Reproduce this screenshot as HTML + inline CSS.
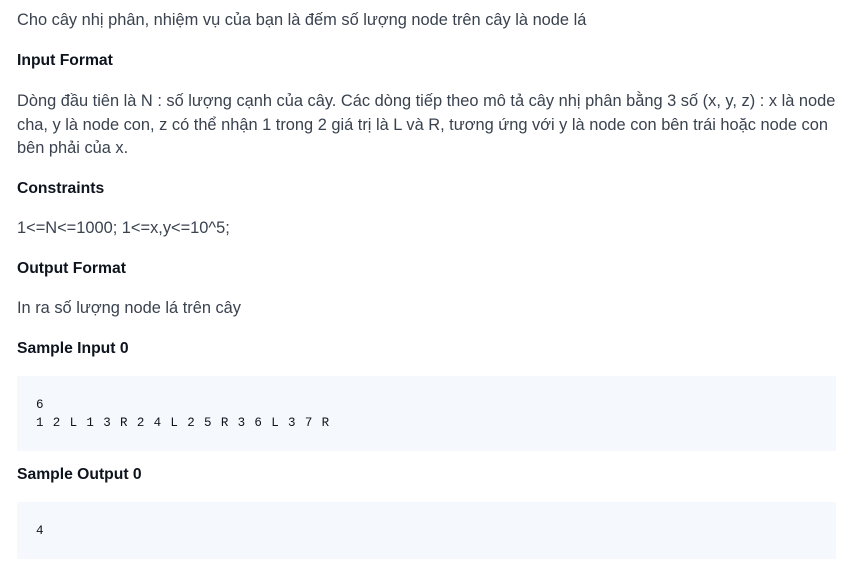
<!DOCTYPE html>
<html><head><meta charset="utf-8"><style>
body{margin:0;width:849px;height:561px;background:#fff;font-family:"Liberation Sans",sans-serif;color:#0e141e;position:relative;overflow:hidden}
.t{position:absolute;left:17px;font-size:16.4px;white-space:nowrap;line-height:20px;color:#39424e}
.h{position:absolute;left:17px;font-size:15.7px;font-weight:bold;white-space:nowrap;line-height:20px;color:#0e141e}
.code{position:absolute;left:17px;width:819px;background:#f5f8fc}
.c{position:absolute;left:36px;font-family:"Liberation Mono",monospace;font-size:12.5px;letter-spacing:0.9px;line-height:18px;color:#0e141e;white-space:pre}
</style></head><body>
<div class="t" style="top:10px">Cho cây nhị phân, nhiệm vụ của bạn là đếm số lượng node trên cây là node lá</div>
<div class="h" style="top:51px">Input Format</div>
<div class="t" style="top:91px">Dòng đầu tiên là N : số lượng cạnh của cây. Các dòng tiếp theo mô tả cây nhị phân bằng 3 số (x, y, z) : x là node</div>
<div class="t" style="top:115px">cha, y là node con, z có thể nhận 1 trong 2 giá trị là L và R, tương ứng với y là node con bên trái hoặc node con</div>
<div class="t" style="top:138px">bên phải của x.</div>
<div class="h" style="top:179px">Constraints</div>
<div class="t" style="top:218px">1&lt;=N&lt;=1000; 1&lt;=x,y&lt;=10^5;</div>
<div class="h" style="top:259px">Output Format</div>
<div class="t" style="top:298px">In ra số lượng node lá trên cây</div>
<div class="h" style="top:339px">Sample Input 0</div>
<div class="code" style="top:376px;height:75px"></div>
<div class="c" style="top:396px">6
1 2 L 1 3 R 2 4 L 2 5 R 3 6 L 3 7 R</div>
<div class="h" style="top:465px">Sample Output 0</div>
<div class="code" style="top:502px;height:57px"></div>
<div class="c" style="top:522px">4</div>
</body></html>
